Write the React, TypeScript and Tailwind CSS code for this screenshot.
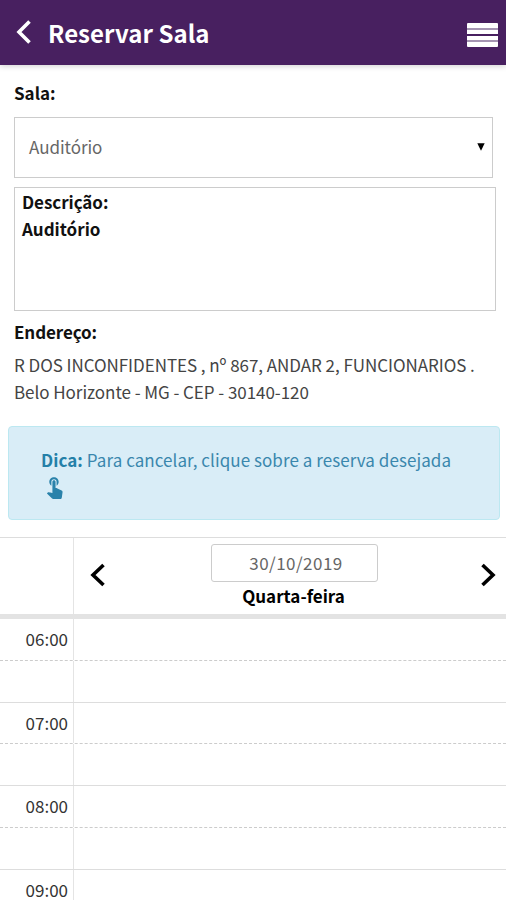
import React, { FC } from "react";
import { MdTouchApp } from "react-icons/md";

const hours = ["06:00", "07:00", "08:00", "09:00"];

interface ArrowProps {
  className?: string;
  points: string;
}

const Arrow: FC<ArrowProps> = ({ className, points }) => (
  <svg viewBox="0 0 16 24" width="16" height="24" className={className}>
    <polyline points={points} fill="none" stroke="currentColor" strokeWidth="3.6" />
  </svg>
);

const TopBar: FC = () => (
  <header className="flex h-[65px] shrink-0 items-center bg-[#482060] pr-2 pl-[15px] text-white shadow-[0_1px_6px_rgba(0,0,0,0.2)]">
    <Arrow points="14.5,1.5 4,12 14.5,22.5" className="mb-px" />
    <h1 className="ml-[17px] flex-1 text-[24px] leading-[32px] font-bold tracking-[0.05px]">Reservar Sala</h1>
    <div className="mt-[5px] flex w-[31px] flex-col overflow-hidden rounded-[1px]">
      <div className="h-[5px] bg-white" />
      <div className="h-[2px] bg-[#a595b2]" />
      <div className="h-[4px] bg-white" />
      <div className="h-[2px]" />
      <div className="h-[4px] bg-white" />
      <div className="h-[2px] bg-[#a595b2]" />
      <div className="h-[5px] bg-white" />
    </div>
  </header>
);

const RoomForm: FC = () => (
  <section className="shrink-0 pt-[14px] pl-[14px] pr-[10px]">
    <p className="font-bold">Sala:</p>
    <div className="mt-[11px] mr-[3px] flex h-[61px] items-center justify-between border border-[#cccccc] pb-[2px] pl-[14px] pr-[7px] text-[#666]">
      <span className="tracking-[-0.05px]">Auditório</span>
      <svg viewBox="0 0 8 8" width="8" height="8" className="text-black">
        <path d="M0.3 0.3h7.4L4 7.8z" fill="currentColor" />
      </svg>
    </div>
    <div className="mt-[9px] h-[124px] border border-[#cccccc] pl-[7px] font-bold">
      <p className="tracking-[-0.05px]">Descrição:</p>
      <p>Auditório</p>
    </div>
    <p className="mt-[7px] font-bold tracking-[-0.1px]">Endereço:</p>
    <p className="mt-[6px] tracking-[-0.05px] whitespace-nowrap text-[#444]">
      R DOS INCONFIDENTES , nº 867, ANDAR 2, FUNCIONARIOS .
      <br />
      Belo Horizonte - MG - CEP - 30140-120
    </p>
  </section>
);

const Tip: FC = () => (
  <div className="mt-[21px] mr-[6px] ml-2 h-[94px] shrink-0 rounded-[4px] border border-[#bce8f1] bg-[#d9edf7] pt-[19px] pl-8 text-[#3a87ad]">
    <p className="tracking-[0.06px] whitespace-nowrap">
      <b className="text-[#2480a8]">Dica:</b> Para cancelar, clique sobre a reserva desejada
    </p>
    <MdTouchApp className="mt-px ml-px h-[25px] w-[25px] text-[#2a82aa]" />
  </div>
);

const Agenda: FC = () => (
  <section className="mt-[17px] shrink-0">
    <div className="flex h-[77px] border-t border-[#dddddd]">
      <div className="w-[74px] border-r border-[#e4e4e4]" />
      <div className="flex flex-1 items-center justify-between pr-[9px] pl-[15px] text-black">
        <Arrow points="14.5,2 4,12 14.5,22" className="mb-[2px]" />
        <div className="flex flex-col items-center pl-[2px]">
          <div className="flex h-[38px] w-[167px] items-center justify-center rounded-[3px] border border-[#cccccc] pl-[4px] tracking-[0.45px] text-[#666]">
            30/10/2019
          </div>
          <p className="pr-px font-bold">Quarta-feira</p>
        </div>
        <Arrow points="1.5,2 12,12 1.5,22" className="mb-[2px]" />
      </div>
    </div>
    <div className="h-[5px] bg-[#e3e3e3]" />
    {hours.map((hour) => (
      <div key={hour} className="flex h-[83.7px] flex-col border-b border-[#dddddd]">
        <div className="flex h-[41.8px] border-b border-dashed border-[#cccccc]">
          <div className="flex w-[74px] items-center justify-end border-r border-[#e4e4e4] pr-[5px] pb-[2px] text-[#333]">
            {hour}
          </div>
        </div>
        <div className="w-[74px] flex-1 border-r border-[#e4e4e4]" />
      </div>
    ))}
  </section>
);

const App: FC = () => {
  return (
    <div className="flex h-[900px] w-full flex-col overflow-hidden bg-white font-['Noto_Sans_CJK_SC','Noto_Sans',sans-serif] text-[17px] leading-[27px] text-[#111]">
      <TopBar />
      <RoomForm />
      <Tip />
      <Agenda />
    </div>
  );
};

export default App;
